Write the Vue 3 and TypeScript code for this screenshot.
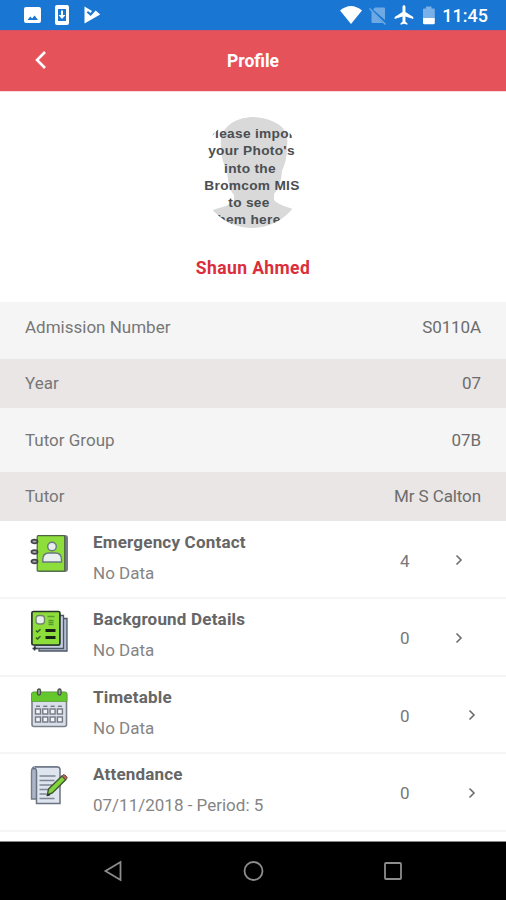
<script setup lang="ts">
interface Detail { label: string; value: string; height: number; pad: number }
interface MenuItem { icon: string; title: string; sub: string; count: number; inset: boolean }

const details: Detail[] = [
  { label: 'Admission Number', value: 'S0110A', height: 57, pad: 15 },
  { label: 'Year', value: '07', height: 49, pad: 14 },
  { label: 'Tutor Group', value: '07B', height: 64, pad: 22 },
  { label: 'Tutor', value: 'Mr S Calton', height: 49, pad: 14 },
]

const items: MenuItem[] = [
  { icon: 'contact', title: 'Emergency Contact', sub: 'No Data', count: 4, inset: true },
  { icon: 'background', title: 'Background Details', sub: 'No Data', count: 0, inset: true },
  { icon: 'timetable', title: 'Timetable', sub: 'No Data', count: 0, inset: false },
  { icon: 'attendance', title: 'Attendance', sub: '07/11/2018 - Period: 5', count: 0, inset: false },
]
const columns = [0, 1, 2, 3]
</script>

<template>
  <div class="screen">
    <div class="status">
      <svg class="status-left" width="90" height="30" viewBox="0 0 90 30">
        <path fill="#fff" fill-rule="evenodd" d="M6 7h13q2 0 2 2v12q0 2-2 2H6q-2 0-2-2V9q0-2 2-2zM7.500 20h10.500l-3.400-4.500-2.500 3-1.800-2.100z" />
        <path fill="#fff" fill-rule="evenodd" d="M37 5h10q2 0 2 2v16q0 2-2 2H37q-2 0-2-2V7q0-2 2-2zM38 9v12h8V9z" />
        <path fill="#fff" d="M41 10.500h2v4.500h2.500L42 19l-3.500-4H41z" />
        <path fill="#fff" d="M64.500 6.500L72 11l-1.500 2-2.500-2-1.300 1.500 4 3.500 5-5.500 4.500 4-15.700 9z" />
      </svg>
      <div class="status-right">
        <svg width="100" height="30" viewBox="0 0 100 30">
          <path fill="#fff" d="M0 10.500Q11 1.500 22 10.500L11 24z" />
          <path fill="#6fa9e3" d="M35 7.500h9q1 0 1 1v11.500L33 9.500z M31.500 11l11.500 12H32.500q-1 0-1-1z" />
          <path stroke="#6fa9e3" stroke-width="1.400" d="M29.500 8.500l16 16" />
          <path fill="#fff" transform="translate(52.700 3.200) scale(.98)" d="M21 16v-2l-8-5V3.500c0-.83-.67-1.500-1.500-1.500S10 2.670 10 3.500V9l-8 5v2l8-2.500V19l-2 1.500V22l3.500-1 3.500 1v-1.500L13 19v-5.500z" />
          <path fill="#7ab0e8" d="M86 6.500h5.500v2H94q.8 0 .8 1V18H83V9.500q0-1 .8-1H86z" />
          <path fill="#fff" d="M83 18h11.800v5q0 1.300-1.300 1.300h-9.200Q83 24.300 83 23z" />
        </svg>
        <span class="clock">11:45</span>
      </div>
    </div>

    <header class="header">
      <svg class="back" width="14" height="20" viewBox="0 0 14 20"><path d="M11 2L3 10l8 8" /></svg>
      <h1>Profile</h1>
    </header>

    <section class="identity">
      <svg class="avatar" width="110" height="114" viewBox="-3 0 110 114">
        <defs><clipPath id="portrait"><ellipse cx="52" cy="55.500" rx="53.500" ry="55.500" /></clipPath></defs>
        <path clip-path="url(#portrait)" fill="#d9d9d9" d="M54 0C33 0 19 12 21 29c0 12 3 18 6 25 1 13 3 19 7 24v6c-4 5-14 6-24 10v20h88V94c-10-4-20-6-24-11v-6c5-6 7-12 8-23 3-7 5-13 5-25C90 12 76 0 54 0z" />
        <g clip-path="url(#portrait)" class="avatar-text">
          <text x="52.500" y="21">Please import</text>
          <text x="51.500" y="38">your Photo's</text>
          <text x="50" y="55.500">into the</text>
          <text x="52" y="72.500">Bromcom MIS</text>
          <text x="49" y="89.500">to see</text>
          <text x="46.500" y="106.500">them here</text>
        </g>
      </svg>
      <h2>Shaun Ahmed</h2>
    </section>

    <dl class="details">
      <div v-for="d in details" :key="d.label" class="detail" :style="{ height: d.height + 'px', paddingTop: d.pad + 'px' }">
        <dt>{{ d.label }}</dt>
        <dd>{{ d.value }}</dd>
      </div>
    </dl>

    <ul class="menu">
      <li v-for="item in items" :key="item.title">
        <svg class="icon" width="42" height="42" viewBox="0 0 42 42">
          <g v-if="item.icon === 'contact'">
            <rect x="10" y="2" width="30" height="37" rx="3" fill="#777b86" />
            <rect x="9.200" y="2.700" width="27.500" height="35.500" rx="1" fill="#8ede3b" stroke="#4b6641" stroke-width="1.200" />
            <g fill="#aaa" stroke="#43454b" stroke-width="1.800">
              <ellipse cx="6.500" cy="8.500" rx="3" ry="1.800" /><ellipse cx="6.500" cy="19" rx="3" ry="1.800" /><ellipse cx="6.500" cy="28.500" rx="3" ry="1.800" />
            </g>
            <g fill="#e7f0ee" stroke="#6b7780" stroke-width="1.400">
              <circle cx="24" cy="13.500" r="4.300" /><path d="M14.800 29v-2.500q0-6.500 6.200-6.500h6.200q6.300 0 6.300 6.500V29z" />
            </g>
          </g>
          <g v-else-if="item.icon === 'background'">
            <path fill="#b3bdd0" stroke="#4d5665" stroke-width="1.300" d="M34 8.500h5V41H11v-3h23z" />
            <path fill="#c6cfdf" stroke="#4d5665" stroke-width="1.300" d="M31 5.500h4.500V38.500H7V35h24z" />
            <rect x="3.900" y="1.500" width="28" height="33.500" rx="1.500" fill="#8ede3b" stroke="#27332b" stroke-width="1.700" />
            <rect x="8" y="5.500" width="8.500" height="8.500" rx="3" fill="#e9efee" stroke="#71846e" stroke-width="1.300" />
            <path stroke="#5b9b35" stroke-width="1.300" d="M19.500 6.500h7M20.500 10.500h5M20.500 12.500h5M20.500 14.500h5" />
            <path stroke="#172018" stroke-width="3.200" d="M17.500 20.500h10M17.500 27.500h10" />
            <path fill="none" stroke="#315f24" stroke-width="1.500" d="M8 20.500l1.500 1.500 3-2.800M8 27.500l1.500 1.500 3-2.800" />
            <path stroke="#30363f" stroke-width="1.600" d="M4.500 38.500h4M6.500 36.500v4" />
          </g>
          <g v-else-if="item.icon === 'timetable'">
            <rect x="4" y="4.500" width="34.500" height="34" rx="2" fill="#d8dfe9" stroke="#7b7f89" stroke-width="1.600" />
            <path fill="#64c72c" stroke="#5d9a3d" stroke-width=".8" d="M3.500 6q0-2 2-2h31.500q2 0 2 2v7.500H3.500z" />
            <g fill="#9da2a3" stroke="#485149" stroke-width="1.300"><rect x="9.500" y="1" width="3" height="6" rx="1.500" /><rect x="30" y="1" width="3" height="6" rx="1.500" /></g>
            <g v-for="c in columns" :key="c" fill="#f1f4f8" stroke="#747884" stroke-width="1.400">
              <path :d="`M${8 + c * 7.3} 18.300h4`" />
              <rect :x="7.5 + c * 7.300" y="21" width="5" height="5" /><rect :x="7.5 + c * 7.300" y="29" width="5" height="5" />
            </g>
          </g>
          <g v-else>
            <path fill="#aab5c6" stroke="#737c8b" stroke-width="1.400" d="M29 2H7Q3.500 2 3.500 7v27h6z" />
            <path fill="#dfe5ee" stroke="#6a7382" stroke-width="1.500" d="M7 2h22.500q2.500 0 2.500 3v33.500H8.500V7Q8.500 2 5 4" />
            <path fill="none" stroke="#7f8796" stroke-width="1.500" d="M11.500 11h16M11.500 15.500h15M11.500 20h13M11.500 24.500h10M11.500 29h7M11.500 33.500h15" />
            <path fill="#84d33c" stroke="#3d5630" stroke-width="1.400" d="M20.500 24L34 11l3.700 3.700L24.300 28l-5 2z" />
            <path fill="#bd6658" stroke="#71483f" d="M34 11l1.500-1.500q3 .8 3.800 3.600l-1.600 1.600z" />
            <path stroke="#27331f" stroke-width="1.800" d="M19 30.500l3-1" />
          </g>
        </svg>
        <div class="copy"><h3>{{ item.title }}</h3><p>{{ item.sub }}</p></div>
        <span class="count">{{ item.count }}</span>
        <svg class="chevron" :class="{ inset: item.inset }" width="8" height="12" viewBox="0 0 8 12"><path d="M1.500 1.500L6 6l-4.500 4.500" /></svg>
      </li>
    </ul>

    <nav class="navbar">
      <svg width="22" height="22" viewBox="0 0 22 22"><path d="M18.500 2v18L3.500 11z" /></svg>
      <svg width="22" height="22" viewBox="0 0 22 22"><circle cx="11.500" cy="11" r="9" /></svg>
      <svg width="22" height="22" viewBox="0 0 22 22"><rect x="3" y="3" width="16" height="16" rx="1" /></svg>
    </nav>
  </div>
</template>

<style>
body { margin: 0; overflow: hidden; }
</style>

<style scoped>
.screen { width: 506px; height: 900px; display: flex; flex-direction: column; background: #fff; font-family: Roboto, "Liberation Sans", sans-serif; overflow: hidden; }
.screen * { box-sizing: border-box; }
h1, h2, h3, p, dl, dd, ul { margin: 0; padding: 0; }
svg { display: block; flex: none; }
.status { height: 30px; background: #1976d2; display: flex; justify-content: space-between; flex: none; }
.status-left { margin-left: 20px; }
.status-right { display: flex; padding-right: 18px; }
.clock { width: 48px; font-size: 18px; font-weight: 500; line-height: 32px; color: #fff; text-align: right; white-space: nowrap; }
.header { height: 61px; flex: none; display: grid; grid-template-columns: 1fr auto 1fr; align-items: center; background: #e6525a; border-top: 1px solid #ce5569; }
.back { margin-left: 34px; margin-bottom: 2px; fill: none; stroke: #fff; stroke-width: 2.6; }
h1 { color: #fff; font-size: 17.5px; font-weight: 700; line-height: 24px; }
.identity { height: 211px; flex: none; display: flex; flex-direction: column; align-items: center; padding-top: 25px; border-top: 1px solid #f9d9dc; }
.avatar { margin-right: 2px; }
.avatar-text { font: bold 13.7px "Liberation Sans", sans-serif; fill: #4a4e52; text-anchor: middle; letter-spacing: .3px; }
h2 { margin-top: 25px; color: #dc2d3b; font-size: 17.5px; font-weight: 700; line-height: 24px; letter-spacing: .4px; }
.detail { display: flex; justify-content: space-between; padding: 0 25px; background: #f5f5f5; color: #777; font-size: 17px; line-height: 20px; }
.detail:nth-child(even) { background: #e9e6e5; }
dd { color: #6c6c6c; letter-spacing: -.1px; }
.menu { list-style: none; padding-top: .5px; }
li { height: 77.5px; display: flex; border-bottom: 2px solid #f5f5f5; }
.icon { margin: 11px 0 0 28px; }
.copy { width: 307px; padding-left: 23px; }
h3 { padding-top: 8px; color: #666; font-size: 17px; font-weight: 700; line-height: 24px; letter-spacing: .2px; }
p { padding-top: 8px; color: #858585; font-size: 17px; line-height: 22px; }
.count { width: 55px; padding: 28px 0 0 23px; color: #777; font-size: 17px; line-height: 22px; }
.chevron { margin: 32.5px 0 0 36px; fill: none; stroke: #6d6d6d; stroke-width: 1.6; }
.chevron.inset { margin-left: 23px; }
.navbar { margin-top: auto; height: 59px; display: flex; align-items: center; justify-content: space-between; padding: 0 102px; background: #000; border-top: 1px solid #888; }
.navbar svg { fill: none; stroke: #8d8d8d; stroke-width: 1.8; }
</style>
